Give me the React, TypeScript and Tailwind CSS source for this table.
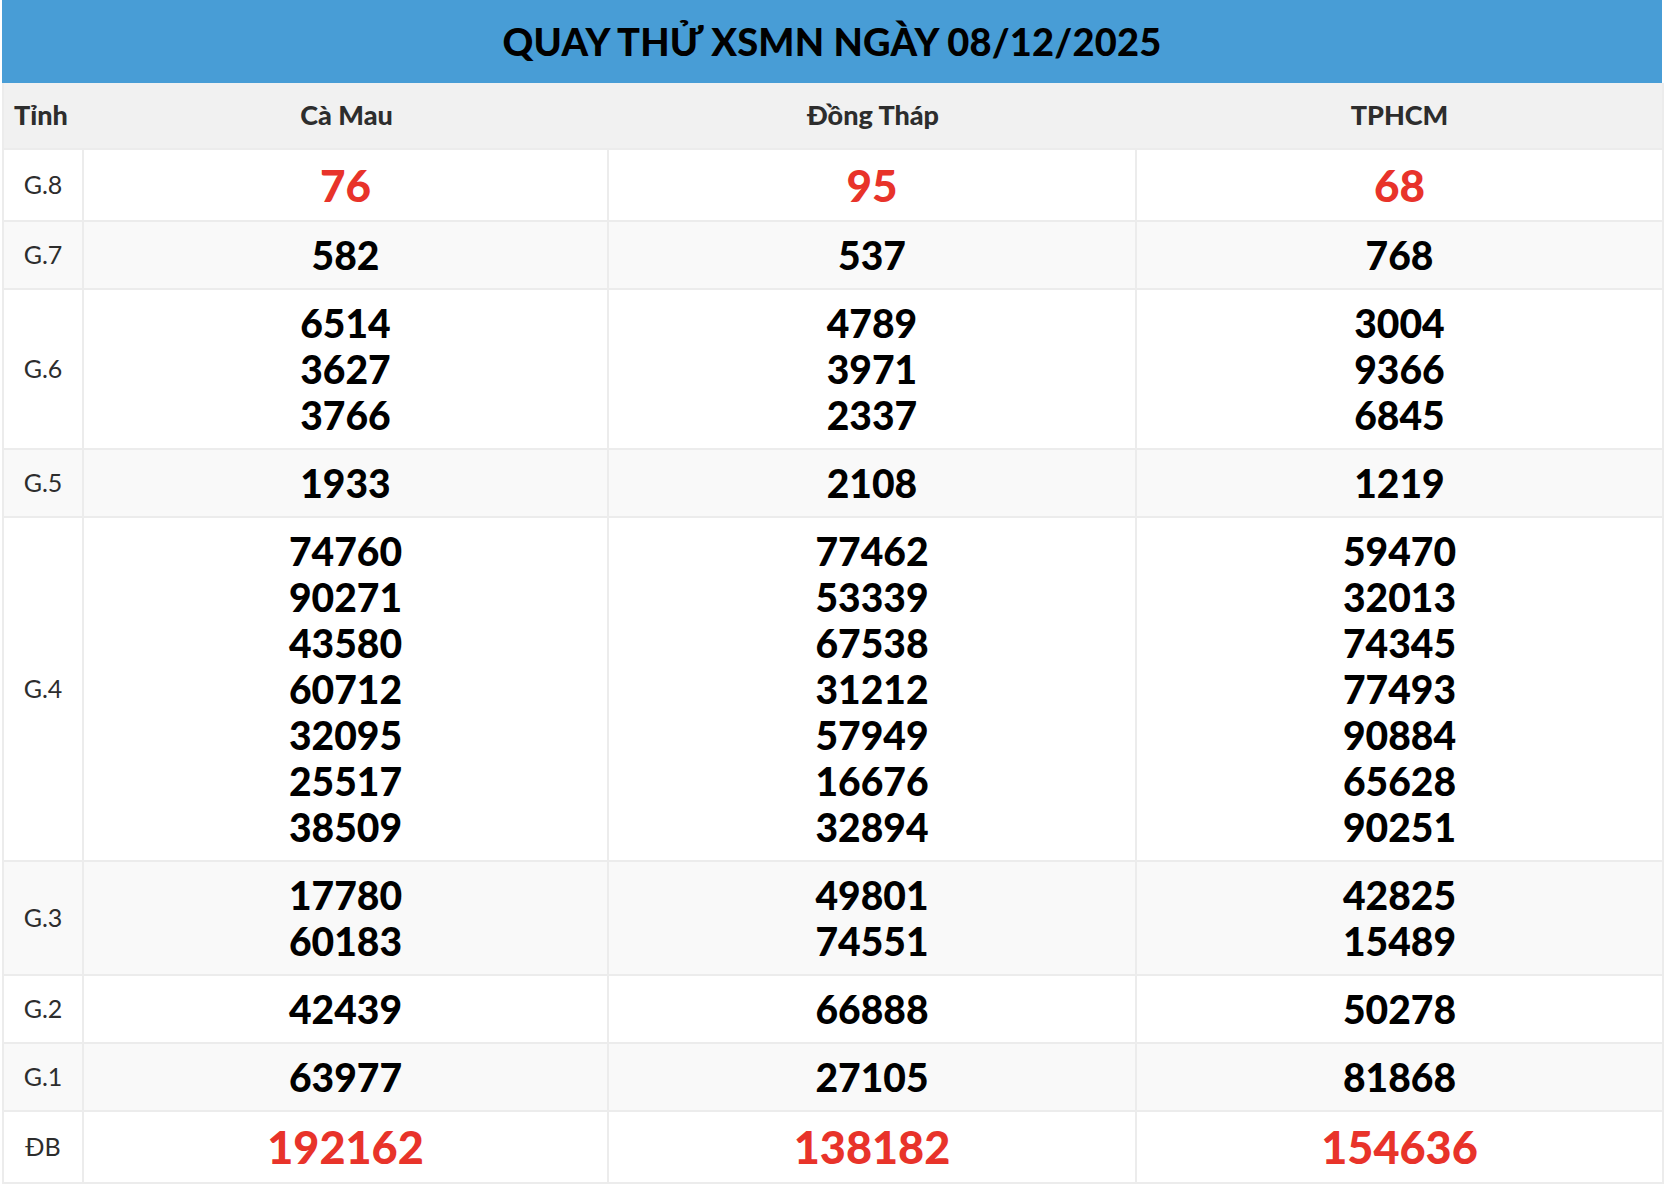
import React from "react";

type Row = { label: string; vals: string[][]; kind?: "red8" | "db" };

const rows: Row[] = [
  { label: "G.8", vals: [["76"], ["95"], ["68"]], kind: "red8" },
  { label: "G.7", vals: [["582"], ["537"], ["768"]] },
  { label: "G.6", vals: [["6514", "3627", "3766"], ["4789", "3971", "2337"], ["3004", "9366", "6845"]] },
  { label: "G.5", vals: [["1933"], ["2108"], ["1219"]] },
  {
    label: "G.4",
    vals: [
      ["74760", "90271", "43580", "60712", "32095", "25517", "38509"],
      ["77462", "53339", "67538", "31212", "57949", "16676", "32894"],
      ["59470", "32013", "74345", "77493", "90884", "65628", "90251"],
    ],
  },
  { label: "G.3", vals: [["17780", "60183"], ["49801", "74551"], ["42825", "15489"]] },
  { label: "G.2", vals: [["42439"], ["66888"], ["50278"]] },
  { label: "G.1", vals: [["63977"], ["27105"], ["81868"]] },
  { label: "ĐB", vals: [["192162"], ["138182"], ["154636"]], kind: "db" },
];

export default function App() {
  return (
    <div className="bg-white min-h-screen" style={{ fontFamily: "Lato, 'Noto Sans', sans-serif" }}>
      <div className="ml-[2px] w-[1660px]">
        <div className="h-[83px] bg-[#489dd6] flex items-center justify-center">
          <h1 className="text-[38px] font-black text-black tracking-[0.2px]">QUAY THỬ XSMN NGÀY 08/12/2025</h1>
        </div>
        <div className="grid grid-cols-[80px_525px_528px_527px] border-l-2 border-[#ececec]">
          <div className="h-[65px] bg-[#f1f1f1] flex items-center pl-[10px] text-[27px] font-black text-[#2d2d2d]">Tỉnh</div>
          <div className="h-[65px] bg-[#f1f1f1] flex items-center justify-center text-[27px] font-black text-[#2d2d2d]">Cà Mau</div>
          <div className="h-[65px] bg-[#f1f1f1] flex items-center justify-center text-[27px] font-black text-[#2d2d2d]">Đồng Tháp</div>
          <div className="h-[65px] bg-[#f1f1f1] flex items-center justify-center text-[27px] font-black text-[#2d2d2d] border-r-2 border-[#ececec]">TPHCM</div>
          {rows.map((r, i) => {
            const bg = i % 2 === 0 ? "bg-white" : "bg-[#f9f9f9]";
            const numCls =
              r.kind === "red8"
                ? "text-[44px] leading-[50px] text-[#e8332a]"
                : r.kind === "db"
                ? "text-[45px] leading-[50px] text-[#e8332a]"
                : "text-[39px] leading-[46px] text-black";
            return (
              <React.Fragment key={r.label}>
                <div className={`${bg} border-t-2 border-r-2 border-[#ececec] flex items-center justify-center text-[25px] text-[#2d2d2d]`}>
                  {r.label}
                </div>
                {r.vals.map((col, j) => (
                  <div
                    key={j}
                    className={`${bg} border-t-2 border-r-2 border-[#ececec] py-[10px] flex flex-col items-center justify-center font-black`}
                  >
                    {col.map((v) => (
                      <div key={v} className={numCls}>
                        {v}
                      </div>
                    ))}
                  </div>
                ))}
              </React.Fragment>
            );
          })}
          <div className="col-span-4 border-t-2 border-[#ececec] h-0"></div>
        </div>
      </div>
    </div>
  );
}
